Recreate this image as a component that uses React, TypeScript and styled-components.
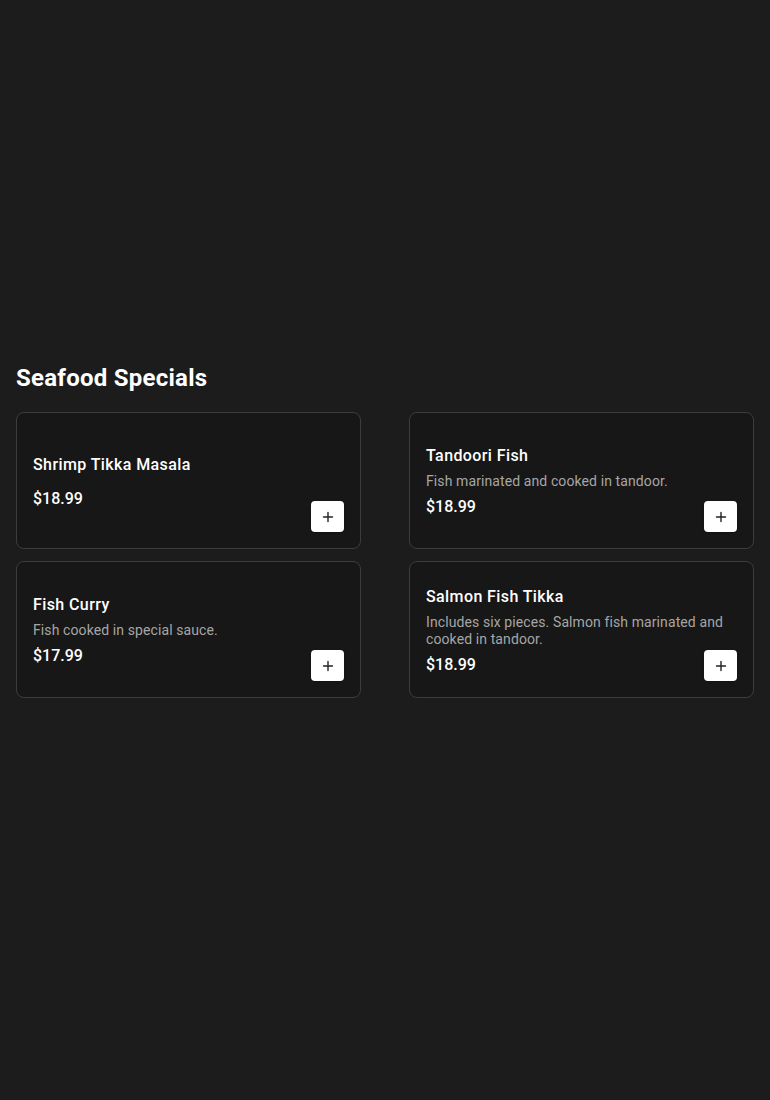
import React from 'react';
import styled, { createGlobalStyle } from 'styled-components';

const GlobalStyle = createGlobalStyle`
  html, body {
    margin: 0;
    padding: 0;
    background: #1c1c1c;
    font-family: Roboto, 'Liberation Sans', sans-serif;
    color: #ffffff;
  }
`;

const Page = styled.main`
  min-height: 1100px;
  box-sizing: border-box;
  padding: 360px 16px 16px;
  background: #1c1c1c;
`;

const Heading = styled.h2`
  margin: 0 0 16px;
  font-size: 24px;
  line-height: 36px;
  font-weight: 700;
  letter-spacing: 0.25px;
  color: #ffffff;
`;

const Grid = styled.div`
  display: grid;
  grid-template-columns: 1fr 1fr;
  column-gap: 48px;
  row-gap: 12px;
`;

const Card = styled.div`
  display: grid;
  min-height: 137px;
  box-sizing: border-box;
  padding: 16px;
  background: #171717;
  border: 1px solid #3d3d3d;
  border-radius: 8px;
`;

// text block sits a touch below the card's middle
const Info = styled.div`
  grid-area: 1 / 1;
  align-self: center;
  margin-top: 2px;
  display: flex;
  flex-direction: column;
`;

const Title = styled.h3`
  margin: 0 0 5px;
  font-size: 16px;
  line-height: 24px;
  font-weight: 500;
  letter-spacing: 0.4px;
  color: #ffffff;
`;

const Description = styled.p`
  margin: 0 0 5px;
  font-size: 14px;
  line-height: 17px;
  font-weight: 400;
  letter-spacing: 0.1px;
  color: #a6a6a6;
`;

const Price = styled.span`
  font-size: 16px;
  line-height: 24px;
  font-weight: 500;
  color: #ffffff;
`;

const AddButton = styled.button`
  grid-area: 1 / 1;
  align-self: end;
  justify-self: end;
  width: 33px;
  height: 31px;
  padding: 0;
  display: flex;
  align-items: center;
  justify-content: center;
  background: #ffffff;
  border: none;
  border-radius: 4px;
  box-shadow: 0 1px 2px rgba(0, 0, 0, 0.3);
  cursor: pointer;
`;

interface Dish {
  name: string;
  description: string;
  price: string;
}

const dishes: Dish[] = [
  { name: 'Shrimp Tikka Masala', description: '', price: '$18.99' },
  { name: 'Tandoori Fish', description: 'Fish marinated and cooked in tandoor.', price: '$18.99' },
  { name: 'Fish Curry', description: 'Fish cooked in special sauce.', price: '$17.99' },
  {
    name: 'Salmon Fish Tikka',
    description: 'Includes six pieces. Salmon fish marinated and cooked in tandoor.',
    price: '$18.99',
  },
];

const PlusIcon = () => (
  <svg width="12" height="12" viewBox="0 0 12 12" fill="none">
    <path d="M6 1.5v9M1.5 6h9" stroke="#222" strokeWidth="1.4" strokeLinecap="round" />
  </svg>
);

const App: React.FC = function () {
  return (
    <>
      <GlobalStyle />
      <Page>
        <Heading>Seafood Specials</Heading>
        <Grid>
          {dishes.map((dish) => (
            <Card key={dish.name}>
              <Info>
                <Title>{dish.name}</Title>
                <Description>{dish.description}</Description>
                <Price>{dish.price}</Price>
              </Info>
              <AddButton aria-label={`Add ${dish.name}`}>
                <PlusIcon />
              </AddButton>
            </Card>
          ))}
        </Grid>
      </Page>
    </>
  );
};

export default App;
